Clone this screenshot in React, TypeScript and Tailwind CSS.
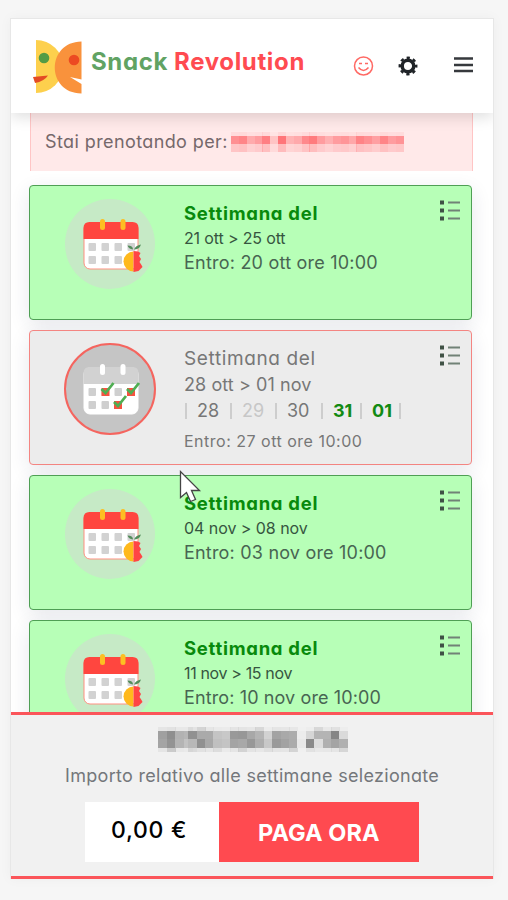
const nameBlocks = [
  [158, '#a0a0a0', '#a4a4a4'], [167, '#8f8f8f', '#939393'], [175, '#b2b2b2', '#b4b4b4'], [184, '#b6b6b6', '#c2c2c2'],
  [188, '#919191', '#b8b8b8'], [197, '#aaaaaa', '#909090'], [205, '#aaaaaa', '#a8a8a8'], [213, '#c4c4c4', '#c0c0c0'],
  [222, '#c8c8c8', '#c4c4c4'], [230, '#999999', '#a4a4a4'], [238, '#979797', '#a8a8a8'], [247, '#a8a8a8', '#989898'],
  [255, '#b4b4b4', '#aeaeae'], [264, '#d2d2d2', '#c8c8c8'], [272, '#a3a3a3', '#9a9a9a'], [281, '#a9a9a9', '#a2a2a2'],
  [289, '#acacac', '#ababab'], [297, '#ececec', '#e8e8e8'], [306, '#d6d6d6', '#8a8a8a'], [314, '#b4b4b4', '#dddddd'],
  [323, '#b4b4b4', '#b0b0b0'], [331, '#868686', '#a4a4a4'], [339, '#dadada', '#b0b0b0'],
];

const userBlocks = [
  '#ff8f92', '#ff8588', '#ffaaac', '#ff9c9f', '#ff7f83', '#ffc4c4', '#ff7579', '#ffb3b4', '#ffa9ab', '#ff898c', '#ff7b7e',
  '#ff9c9f', '#ffafb1', '#ff9c9f', '#ff9598', '#ffa7a9', '#ff8386', '#ff8f92', '#ff9fa2', '#ff8588', '#ff9c9f', '#ff9396',
];

const days = [
  { day: '28', className: 'w-[33px]' },
  { day: '29', className: 'w-[33px] text-[#c7c7c7]' },
  { day: '30', className: 'w-[34px]' },
  { day: '31', className: 'w-[27px] font-bold text-[#128a13]' },
  { day: '01', className: 'w-[27px] font-bold text-[#128a13]' },
];

function Logo() {
  return (
    <svg className="mt-[20px] block h-[56px] w-[52px] shrink-0" viewBox="0 0 52 56">
      <path d="M4 1a27 26.500 0 0 1 0 53z" fill="#fdd04d" />
      <path d="M49.500 2.500C14 3 14 54 49.500 54.500V45L38 38l11.500 2.500z" fill="#f9923c" />
      <circle cx="12" cy="19" r="5.300" fill="#539b45" />
      <circle cx="42" cy="21" r="5.300" fill="#ec4a22" />
      <path d="M1 38l15-1.500q-4 6-13 7.500z" fill="#e34b24" />
    </svg>
  );
}

function Calendar({ closed = false }: { closed?: boolean }) {
  const main = closed ? '#d2d2d2' : '#ff463f';
  const cell = closed ? '#cfcfcf' : '#d2d2d2';
  return (
    <svg className="block size-[92px] shrink-0" viewBox="0 0 92 92">
      <circle cx="46" cy="46" r="45" fill={closed ? '#c5c5c5' : '#c6eac6'} stroke={closed ? '#f5655f' : 'none'} strokeWidth="2" />
      <rect x="20" y="25" width="54" height="46" rx="6" fill="#fff" stroke={closed ? '#fff' : '#ff8f80'} strokeWidth="1" />
      <path d="M19.500 41V30q0-6 6-6h43q6 0 6 6v11z" fill={main} />
      {[38.5, 59].map((x) => (
        <rect key={x} x={x - 2.5} y="21" width="5" height="11" rx="2.500" fill={closed ? '#fff' : '#fdbf22'} />
      ))}
      {[24.5, 37.5, 50.5, 63.5].map((x) => (
        <g key={x} fill={cell}>
          <rect x={x} y="45" width="7.500" height="8" rx="1" />
          {x < 60 && <rect x={x} y="58" width="7.500" height="8" rx="1" />}
        </g>
      ))}
      {closed ? (
        [[41.5, 49], [67, 49], [54, 62]].map(([x, y]) => (
          <g key={`${x}-${y}`}>
            <rect x={x - 4} y={y - 4} width="8" height="8" fill="#f65240" />
            <path d={`M${x - 4} ${y - 3}l4 4 8-10`} fill="none" stroke="#4fae52" strokeWidth="2.800" />
          </g>
        ))
      ) : (
        <g>
          <path d="M69.500 53.500a10 10 0 0 0 0 20z" fill="#ffb91d" />
          <path d="M69.500 53q5 0 7 2l-1.500 3 2 3-1.500 3 2 3 1 2-4 4-5 1z" fill="#ff4545" />
          <path d="M69 51.500q0-4-5.500-4 1 3.500 5.500 4zm1 0q5.500 0 7-5-5.500 1-7 5z" fill="#548d5b" />
        </g>
      )}
    </svg>
  );
}

function TaskIcon() {
  return (
    <svg className="mt-[13px] mr-[10px] block h-[23px] w-[22px] shrink-0" viewBox="0 0 22 23">
      {[1.5, 9.5, 17.5].map((y) => (
        <g key={y}>
          <rect x="1" y={y} width="4" height="4" fill="#3f5145" />
          <rect x="9" y={y + 1} width="12" height="2" fill="#718277" />
        </g>
      ))}
    </svg>
  );
}

function OpenWeek({ range, until, rangeClass, untilClass }: { range: string; until: string; rangeClass: string; untilClass: string }) {
  return (
    <section className="flex h-[135px] shrink-0 rounded-[4px] border-[1.500px] border-[#4f9f55] bg-[#b7ffb7] shadow-[0_6px_20px_#2030501c]">
      <div className="mt-[12px] ml-[34px]"><Calendar /></div>
      <div className="mt-[14px] ml-[28px] grow whitespace-nowrap text-[#486552]">
        <h2 className="h-[25px] text-[18.500px] leading-[26px] font-bold tracking-[0.720px] text-[#088a0c]">Settimana del</h2>
        <p className={`h-[25px] text-[16px] leading-[26px] text-[#365540] ${rangeClass}`}>{range}</p>
        <p className={`h-[26px] text-[18px] leading-[26px] ${untilClass}`}>{until}</p>
      </div>
      <TaskIcon />
    </section>
  );
}

function Divider() {
  return <i className="h-[16px] w-[2px] shrink-0 bg-[#cdcdcd]" />;
}

export default function App() {
  return (
    <div className="h-[900px] w-[508px] overflow-hidden bg-[#f6f6f6] pt-[18px] pl-[10px] font-['Inter','Open_Sans',sans-serif] [font-feature-settings:'cv11']">
      <main className="flex h-[861px] w-[484px] flex-col overflow-hidden border-x border-t border-[#e7e7e7] bg-white shadow-[0_0_12px_#0000000a]">
        <header className="relative z-10 flex h-[94px] shrink-0 bg-white pl-[21px] shadow-[0_4px_14px_#00000022]">
          <Logo />
          <h1 className="mt-[29px] ml-[7px] w-[215px] shrink-0 text-[24px] leading-[28px] font-bold tracking-[0.650px] whitespace-nowrap text-[#ff4b51]">
            <span className="text-[#61a363]">Snack</span><span className="ml-[6px]">Revolution</span>
          </h1>
          <svg className="mt-[37px] ml-[47px] size-[21px]" viewBox="0 0 21 21" fill="none" stroke="#ff6964" strokeWidth="1.500">
            <circle cx="10.500" cy="10" r="9" />
            <path d="M5.500 11.500q5 6 10 0M6 7.500h3M12 7.500h3" />
          </svg>
          <svg className="mt-[37px] ml-[24px] size-[20px]" viewBox="0 0 20 20" fill="none" stroke="#202428">
            <circle cx="10" cy="10" r="5.800" strokeWidth="3.500" />
            <circle cx="10" cy="10" r="8.200" strokeWidth="2.500" strokeDasharray="3.220 3.220" strokeDashoffset="1.610" />
          </svg>
          <svg className="mt-[37px] ml-[35px] size-[20px]" viewBox="0 0 20 20" stroke="#36393d" strokeWidth="2.400">
            <path d="M1 2.500h19M1 9h19M1 15h19" />
          </svg>
        </header>

        <div className="flex min-h-0 grow flex-col gap-[10px] pr-[21px] pl-[18px]">
          <div className="-mr-px mb-[4px] ml-px flex h-[58px] shrink-0 border-x border-[#ffc5c5] bg-[#ffe9e9] pl-[14px]">
            <p className="mt-[16px] w-[186px] shrink-0 text-[18px] leading-[26px] tracking-[0.400px] whitespace-nowrap text-[#75686b]">Stai prenotando per:</p>
            <svg className="mt-[17px] h-[24px] w-[173px]" viewBox="0 0 173 24" shapeRendering="crispEdges">
              {userBlocks.map((color, i) => (
                <g key={i} fill={color}>
                  <rect x={i * 7.84} y="2" width="8" height="4" opacity=".15" />
                  <rect x={i * 7.84} y="6" width="8" height="8" />
                  <rect x={i * 7.84} y="14" width="8" height="8" opacity=".4" />
                </g>
              ))}
            </svg>
          </div>

          <OpenWeek range="21 ott > 25 ott" until="Entro: 20 ott ore 10:00" rangeClass="tracking-[-0.150px]" untilClass="tracking-[0.220px]" />

          <section className="flex h-[135px] shrink-0 rounded-[4px] border-[1.500px] border-[#f48582] bg-[#ececec] shadow-[0_6px_20px_#2030501c]">
            <div className="mt-[12px] ml-[34px]"><Calendar closed /></div>
            <div className="mt-[15px] ml-[28px] grow whitespace-nowrap text-[#777]">
              <h2 className="h-[26px] text-[19px] leading-[26px] tracking-[0.620px]">Settimana del</h2>
              <p className="h-[26px] text-[18px] leading-[26px] tracking-[0.080px]">28 ott &gt; 01 nov</p>
              <div className="mb-[4px] flex h-[26px] items-center pl-px text-[18px] leading-[26px]">
                {days.map(({ day, className }) => (
                  <div key={day} className="flex items-center gap-[10px]">
                    <Divider />
                    <span className={className}>{day}</span>
                  </div>
                ))}
                <Divider />
              </div>
              <p className="text-[16px] leading-[26px] tracking-[0.500px]">Entro: 27 ott ore 10:00</p>
            </div>
            <TaskIcon />
          </section>

          <OpenWeek range="04 nov > 08 nov" until="Entro: 03 nov ore 10:00" rangeClass="tracking-[-0.050px]" untilClass="tracking-[0.200px]" />
          <OpenWeek range="11 nov > 15 nov" until="Entro: 10 nov ore 10:00" rangeClass="tracking-[-0.350px]" untilClass="tracking-[0.120px]" />
        </div>

        <footer className="relative z-10 flex h-[167px] shrink-0 flex-col border-y-[3px] border-[#fb555a] bg-[#f1f1f1]">
          <svg className="mt-[10px] ml-[147px] block h-[30px] w-[191px] shrink-0" viewBox="0 0 191 30" shapeRendering="crispEdges">
            {nameBlocks.map(([x, top, bottom], i) => (
              <g key={x} transform={`translate(${Number(x) - 158} 0)`}>
                <rect y="2" width="9" height="4" fill={String(top)} opacity={i % 7 === 5 ? 0.4 : 0.15} />
                <rect y="6" width="9" height="9" fill={String(top)} />
                <rect y="14" width="9" height="9" fill={String(bottom)} />
                <rect y="23" width="9" height="4" fill={String(bottom)} opacity={i % 3 === 1 ? 0.4 : 0.15} />
              </g>
            ))}
          </svg>
          <p className="mt-[8px] ml-[54px] h-[26px] text-[18px] leading-[26px] tracking-[0.310px] whitespace-nowrap text-[#74777b]">Importo relativo alle settimane selezionate</p>
          <div className="mt-[13px] ml-[74px] flex h-[60px]">
            <div className="w-[134px] bg-white pl-[26px] text-[23px] leading-[56px] font-medium tracking-[0.700px] whitespace-nowrap">0,00 €</div>
            <button className="w-[200px] bg-[#ff4a50] pt-[2px] pl-[39px] text-left text-[23.500px] leading-[58px] font-bold tracking-[0.100px] whitespace-nowrap text-white">PAGA ORA</button>
          </div>
        </footer>
      </main>

      <svg className="absolute top-[469px] left-[178px] h-[36px] w-[25px]" viewBox="0 0 25 36">
        <path d="M2.500 2.500v26l6-5 4 9 5-2-4-9h8z" fill="#fff" stroke="#444" strokeWidth="1.300" />
      </svg>
    </div>
  );
}
